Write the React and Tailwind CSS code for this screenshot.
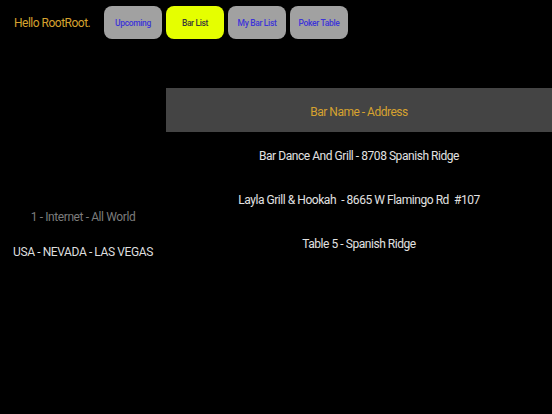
const tabs = [
  { label: "Upcoming", active: false },
  { label: "Bar List", active: true },
  { label: "My Bar List", active: false },
  { label: "Poker Table", active: false },
];

const bars = [
  "Bar Dance And Grill - 8708 Spanish Ridge",
  "Layla Grill & Hookah  - 8665 W Flamingo Rd  #107",
  "Table 5 - Spanish Ridge",
];

export default function App() {
  return (
    <div
      className="w-[552px] h-[414px] bg-black overflow-hidden"
      style={{ fontFamily: "Roboto, 'Liberation Sans', sans-serif" }}
    >
      {/* top bar */}
      <div className="flex items-center h-[44px] pt-[1px]">
        <div className="w-[104px] pl-[14px] pt-[1px] text-[12px] tracking-[-0.5px] text-[#d6a22f]">Hello RootRoot.</div>
        <div className="flex gap-[4px]">
          {tabs.map((t) => (
            <button
              key={t.label}
              className={
                "w-[58px] h-[33px] pt-[1px] rounded-[8px] text-[8.5px] font-medium tracking-[-0.35px] whitespace-pre " +
                (t.active ? "bg-[#e5ff00] text-[#3a3a3a]" : "bg-[#a1a1a1] text-[#3d34d8]")
              }
            >
              {t.label}
            </button>
          ))}
        </div>
      </div>

      <div className="flex mt-[44px]">
        {/* left column */}
        <div className="w-[166px] flex flex-col items-center pt-[121px] gap-[18px] text-[12px] tracking-[-0.4px]">
          <div className="text-[#7c7c7c] leading-[17px]">1 - Internet - All World</div>
          <div className="text-[#dedede] leading-[17px]">USA - NEVADA - LAS VEGAS</div>
        </div>

        {/* right column */}
        <div className="flex-1 flex flex-col">
          <div className="h-[44px] pt-[3px] bg-[#444444] flex items-center justify-center text-[12px] tracking-[-0.5px] text-[#d6a22f]">
            Bar Name - Address
          </div>
          {bars.map((b) => (
            <div
              key={b}
              className="h-[44px] pt-[3px] flex items-center justify-center text-[12px] tracking-[-0.45px] text-[#e2e2e2] whitespace-pre"
            >
              {b}
            </div>
          ))}
        </div>
      </div>
    </div>
  );
}
